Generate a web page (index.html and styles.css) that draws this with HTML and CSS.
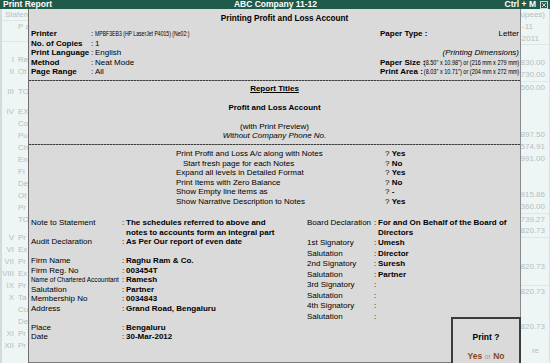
FILE: index.html
```html
<!DOCTYPE html>
<html>
<head>
<meta charset="utf-8">
<title>Print Report</title>
<link rel="stylesheet" href="styles.css">
</head>
<body>
<div class="titlebar">
  <span class="tb-left">Print Report</span>
  <span class="tb-center">ABC Company 11-12</span>
  <span class="tb-right">Ctrl + M <svg class="close" viewBox="0 0 8 8" width="8" height="8"><rect x="0.5" y="0.5" width="7" height="7" fill="none" stroke="#cfd8d4"/><path d="M2 2L6 6M6 2L2 6" stroke="#cfd8d4" stroke-width="1"/></svg></span>
</div>
<div class="main">
  <div class="bg-left">
    <div class="lr hd">Statem</div>
    <div class="lr in">P a</div>
    <div class="lsp-a"></div>
    <div class="lr"><span class="rn">I</span>Re</div>
    <div class="lr"><span class="rn">II</span>Ot</div>
    <div class="lsp-b"></div>
    <div class="lr"><span class="rn">III</span>TO</div>
    <div class="lsp-b"></div>
    <div class="lr"><span class="rn">IV</span>EX</div>
    <div class="lr in">Co</div>
    <div class="lr in">Pu</div>
    <div class="lr in">Ch</div>
    <div class="lr in">En</div>
    <div class="lr in">Fi</div>
    <div class="lr in">De</div>
    <div class="lr in">Ot</div>
    <div class="lr in">Pr</div>
    <div class="lr in">TO</div>
    <div class="lsp-c"></div>
    <div class="lr"><span class="rn">V</span>Pr</div>
    <div class="lr"><span class="rn">VI</span>Ex</div>
    <div class="lr"><span class="rn">VII</span>Pr</div>
    <div class="lr"><span class="rn">VIII</span>Ex</div>
    <div class="lr"><span class="rn">IX</span>Pr</div>
    <div class="lr"><span class="rn">X</span>Ta</div>
    <div class="lr in">Cu</div>
    <div class="lr in">De</div>
    <div class="lr"><span class="rn">XI</span>Pr</div>
    <div class="lr"><span class="rn">XII</span>Pr</div>
  </div>

  <div class="panel">
    <div class="heading">Printing Profit and Loss Account</div>

    <div class="top">
      <div class="tl">
        <b>Printer</b><span>:</span><span><span class="tiny">MPBF3EB3 (HP LaserJet P4015) (Ne02:)</span></span>
        <b>No. of Copies</b><span>:</span><span>1</span>
        <b>Print Language</b><span>:</span><span>English</span>
        <b>Method</b><span>:</span><span>Neat Mode</span>
        <b>Page Range</b><span>:</span><span>All</span>
      </div>
      <div class="tr">
        <div class="tr-row"><b>Paper Type :</b><span>Letter</span></div>
        <div class="tr-row"></div>
        <div class="tr-row end"><i>(Printing Dimensions)</i></div>
        <div class="tr-row"><b>Paper Size :</b><span class="vwrap"><span class="tiny r">(8.50" x 10.98") or (216 mm x 279 mm)</span></span></div>
        <div class="tr-row"><b>Print Area :</b><span class="vwrap"><span class="tiny r">(8.03" x 10.71") or (204 mm x 272 mm)</span></span></div>
      </div>
    </div>

    <div class="sep"></div>

    <div class="titles">
      <div><b class="u">Report Titles</b></div>
      <div class="blank"></div>
      <div><b>Profit and Loss Account</b></div>
      <div class="blank"></div>
      <div>(with Print Preview)</div>
      <div><i>Without Company Phone No.</i></div>
    </div>

    <div class="sep"></div>

    <div class="opts">
      <span>Print Profit and Loss A/c along with Notes</span><span>? <b>Yes</b></span>
      <span class="ind">Start fresh page for each Notes</span><span>? <b>No</b></span>
      <span>Expand all levels in Detailed Format</span><span>? <b>Yes</b></span>
      <span>Print Items with Zero Balance</span><span>? <b>No</b></span>
      <span>Show Empty line items as</span><span>? <b>-</b></span>
      <span>Show Narrative Description to Notes</span><span>? <b>Yes</b></span>
    </div>

    <div class="bottom">
      <div class="bl">
        <span>Note to Statement</span><span>:</span><b>The schedules referred to above and notes to accounts form an integral part</b>
        <span>Audit Declaration</span><span>:</span><b>As Per Our report of even date</b>
        <div class="gblank"></div>
        <span>Firm Name</span><span>:</span><b>Raghu Ram &amp; Co.</b>
        <span>Firm Reg. No</span><span>:</span><b>003454T</b>
        <span><span class="cond">Name of Chartered Accountant</span></span><span>:</span><b>Ramesh</b>
        <span>Salutation</span><span>:</span><b>Partner</b>
        <span>Membership No</span><span>:</span><b>0034843</b>
        <span>Address</span><span>:</span><b>Grand Road, Bengaluru</b>
        <div class="gblank"></div>
        <span>Place</span><span>:</span><b>Bengaluru</b>
        <span>Date</span><span>:</span><b>30-Mar-2012</b>
      </div>
      <div class="br">
        <span>Board Declaration</span><span>:</span><b>For and On Behalf of the Board of Directors</b>
        <span>1st Signatory</span><span>:</span><b>Umesh</b>
        <span>Salutation</span><span>:</span><b>Director</b>
        <span>2nd Signatory</span><span>:</span><b>Suresh</b>
        <span>Salutation</span><span>:</span><b>Partner</b>
        <span>3rd Signatory</span><span>:</span><b></b>
        <span>Salutation</span><span>:</span><b></b>
        <span>4th Signatory</span><span>:</span><b></b>
        <span>Salutation</span><span>:</span><b></b>
      </div>
    </div>
  </div>

  <div class="bg-right">
    <div class="rr">Rupees)</div>
    <div class="rr p1">-11</div>
    <div class="rr p2 lb">-2011</div>
    <div class="rr"></div>
    <div class="rr">,830.00</div>
    <div class="rr">,730.00</div>
    <div class="rr lt">2,560.00</div>
    <div class="rr"></div>
    <div class="rr"></div>
    <div class="rr"></div>
    <div class="rr">,897.50</div>
    <div class="rr">,574.91</div>
    <div class="rr">,991.00</div>
    <div class="rr"></div>
    <div class="rr"></div>
    <div class="rr">,915.86</div>
    <div class="rr">,360.00</div>
    <div class="rr lt">,739.27</div>
    <div class="rr">,820.73</div>
    <div class="rr lt"></div>
    <div class="rr"></div>
    <div class="rr">,820.73</div>
    <div class="rr"></div>
    <div class="rr lt">,820.73</div>
    <div class="rr"></div>
    <div class="rr"></div>
    <div class="rr">,820.73</div>
    <div class="rr"></div>
    <div class="rr p2">re</div>
  </div>
</div>

<div class="printbox">
  <div class="pb-q">Print ?</div>
  <div class="pb-a"><b class="yn">Yes</b> <span class="or">or</span> <b class="yn">No</b></div>
</div>
</body>
</html>
```

FILE: styles.css
```css
* { box-sizing: border-box; margin: 0; padding: 0; }
html, body { width: 550px; height: 363px; overflow: hidden; }
body {
  font-family: "Liberation Sans", Arial, sans-serif;
  font-size: 8px;
  line-height: 9.5px;
  color: #000;
  background: #eef5f5;
  position: relative;
}

/* title bar */
.titlebar {
  height: 9px;
  background: #205a4b;
  color: #fff;
  font-weight: bold;
  font-size: 8.5px;
  line-height: 9px;
  display: grid;
  grid-template-columns: 1fr auto 1fr;
  padding: 0 2px 0 3px;
  white-space: nowrap;
}
.tb-right { justify-self: end; display: flex; align-items: center; gap: 4px; }
.close { display: block; }

.main { display: flex; height: 354px; }

/* faded background columns */
.bg-left {
  width: 28px;
  flex: none;
  border-left: 2px solid #d4dada;
  color: #b5bfbf;
  overflow: hidden;
  white-space: nowrap;
  line-height: 12px;
}
.lr { height: 12px; display: flex; }
.lr.hd { padding-left: 3px; border-bottom: 1px solid #dfe6e6; }
.lr.in { padding-left: 16px; }
.rn { width: 12px; flex: none; text-align: right; margin-right: 4px; }
.lsp-a { height: 21px; border-top: 1px solid #dfe6e6; margin-top: 8px; margin-bottom: -8px; }
.lsp-b { height: 8px; }
.lsp-c { height: 6px; }

.bg-right {
  flex: 1;
  overflow: hidden;
  color: #b5bfbf;
  white-space: nowrap;
  line-height: 12px;
  border-right: 1px solid #d9e1e1;
}
.rr { height: 12px; display: flex; justify-content: flex-end; padding-right: 4px; }
.rr.p1 { padding-right: 16px; }
.rr.p2 { padding-right: 10px; }
.rr.lb { border-bottom: 1px solid #dfe6e6; }
.rr.lt { border-top: 1px solid #dfe6e6; }

/* main dialog panel */
.panel {
  width: 493px;
  flex: none;
  background: #dadada;
  border-left: 1px solid #6f6f6f;
  border-right: 1px solid #8a8a8a;
  border-bottom: 1px solid #7a7a7a;
  display: flex;
  flex-direction: column;
  white-space: nowrap;
}
.heading {
  text-align: center;
  font-weight: bold;
  font-size: 8.2px;
  padding: 5px 0 0 20px;
}

.top { display: flex; margin-top: 5.5px; padding: 0 1px 0 2px; }
.tl { display: grid; grid-template-columns: 60px 4px auto; }
.tr { margin-left: auto; width: 139px; }
.tr-row { height: 9.5px; display: flex; justify-content: space-between; }
.tr-row.end { justify-content: flex-end; }
.vwrap { flex: 1; min-width: 0; display: flex; justify-content: flex-end; }

.tiny {
  display: inline-block;
  white-space: nowrap;
  transform: scaleX(0.64);
  transform-origin: left center;
}
.tiny.r { flex: none; transform: scaleX(0.69); transform-origin: right center; }

.sep {
  height: 1px;
  margin-top: 3px;
  background: repeating-linear-gradient(90deg, #3d3d3d 0 2px, #8a8a8a 2px 3px);
}

.titles { text-align: center; padding-top: 3px; }
.titles > div { height: 9.5px; }
.u { text-decoration: underline; }

.opts {
  display: grid;
  grid-template-columns: 209px auto;
  padding: 4.5px 0 0 147px;
}
.opts .ind { padding-left: 7px; }

.bottom { display: flex; margin-top: 12px; padding-left: 2px; white-space: normal; }
.bl { display: grid; grid-template-columns: 91px 4px 160px; align-content: start; }
.br { display: grid; grid-template-columns: 67px 4px 132px; row-gap: 1px; margin-left: 21px; align-content: start; }
.bl > span, .br > span { white-space: nowrap; }
.gblank { grid-column: 1 / -1; height: 9.5px; }
.cond {
  display: inline-block;
  transform: scaleX(0.8);
  transform-origin: left center;
}

/* Print ? confirmation box */
.printbox {
  position: absolute;
  left: 451px;
  top: 317px;
  width: 70px;
  height: 60px;
  background: #dadada;
  border: 2px solid #3c3c3c;
  text-align: center;
}
.pb-q { font-weight: bold; font-size: 8.5px; padding-top: 14px; }
.pb-a { margin-top: 9px; font-size: 8.5px; }
.yn { color: #8a4814; }
.or { color: #9a9a9a; font-size: 7px; }
```
